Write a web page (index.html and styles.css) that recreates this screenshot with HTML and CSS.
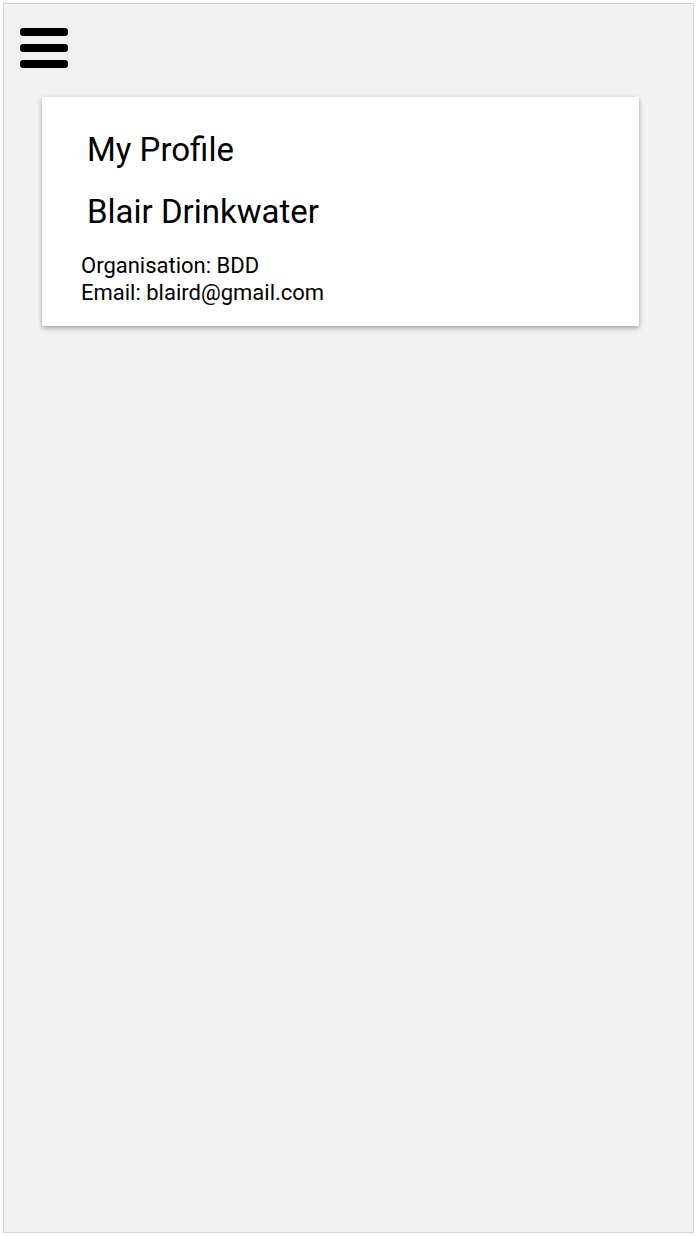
FILE: index.html
```html
<!DOCTYPE html>
<html>
<head>
<meta charset="utf-8">
<link rel="stylesheet" href="styles.css">
</head>
<body>
<div class="frame">
  <div class="topbar">
    <svg class="menu" width="48" height="40" viewBox="0 0 48 40">
      <rect x="0" y="0" width="48" height="8" rx="3" fill="#000"/>
      <rect x="0" y="16" width="48" height="8" rx="3" fill="#000"/>
      <rect x="0" y="32" width="48" height="8" rx="3" fill="#000"/>
    </svg>
  </div>
  <div class="card">
    <h1 class="title">My Profile</h1>
    <h2 class="name">Blair Drinkwater</h2>
    <div class="details">
      <div>Organisation: BDD</div>
      <div>Email: blaird@gmail.com</div>
    </div>
  </div>
</div>
</body>
</html>
```
FILE: styles.css
```css
html, body {
  margin: 0;
  padding: 0;
  background: #ffffff;
}
body {
  font-family: Roboto, "Noto Sans", sans-serif;
  color: #000;
}
.frame {
  margin: 3px 2px 3px 3px;
  height: 1228px;
  border: 1px solid #d3d3d3;
  background: #f2f2f2;
  box-sizing: content-box;
}
.topbar {
  padding: 24px 0 0 16px;
  height: 40px;
}
.menu {
  display: block;
}
.card {
  margin: 29px 0 0 38px;
  width: 597px;
  height: 229px;
  box-sizing: border-box;
  background: #fff;
  border-radius: 2px;
  box-shadow: 0 2px 5px rgba(0,0,0,0.35);
  padding: 33px 0 0 39px;
}
.title, .name {
  margin: 0 0 0 6px;
  font-size: 33px;
  font-weight: 400;
  line-height: 40px;
}
.name {
  margin-top: 22px;
}
.details {
  margin-top: 20px;
  font-size: 22px;
  line-height: 27px;
}
```
